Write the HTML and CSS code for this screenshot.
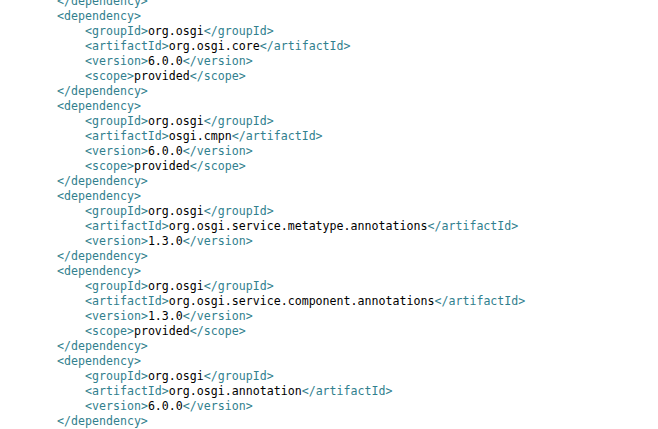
FILE: index.html
```html
<!DOCTYPE html>
<html>
<head>
<meta charset="utf-8">
<link rel="stylesheet" href="styles.css">
</head>
<body>
<pre class="code"><span class="t">&lt;/dependency&gt;</span>
<span class="t">&lt;dependency&gt;</span>
    <span class="t">&lt;groupId&gt;</span>org.osgi<span class="t">&lt;/groupId&gt;</span>
    <span class="t">&lt;artifactId&gt;</span>org.osgi.core<span class="t">&lt;/artifactId&gt;</span>
    <span class="t">&lt;version&gt;</span>6.0.0<span class="t">&lt;/version&gt;</span>
    <span class="t">&lt;scope&gt;</span>provided<span class="t">&lt;/scope&gt;</span>
<span class="t">&lt;/dependency&gt;</span>
<span class="t">&lt;dependency&gt;</span>
    <span class="t">&lt;groupId&gt;</span>org.osgi<span class="t">&lt;/groupId&gt;</span>
    <span class="t">&lt;artifactId&gt;</span>osgi.cmpn<span class="t">&lt;/artifactId&gt;</span>
    <span class="t">&lt;version&gt;</span>6.0.0<span class="t">&lt;/version&gt;</span>
    <span class="t">&lt;scope&gt;</span>provided<span class="t">&lt;/scope&gt;</span>
<span class="t">&lt;/dependency&gt;</span>
<span class="t">&lt;dependency&gt;</span>
    <span class="t">&lt;groupId&gt;</span>org.osgi<span class="t">&lt;/groupId&gt;</span>
    <span class="t">&lt;artifactId&gt;</span>org.osgi.service.metatype.annotations<span class="t">&lt;/artifactId&gt;</span>
    <span class="t">&lt;version&gt;</span>1.3.0<span class="t">&lt;/version&gt;</span>
<span class="t">&lt;/dependency&gt;</span>
<span class="t">&lt;dependency&gt;</span>
    <span class="t">&lt;groupId&gt;</span>org.osgi<span class="t">&lt;/groupId&gt;</span>
    <span class="t">&lt;artifactId&gt;</span>org.osgi.service.component.annotations<span class="t">&lt;/artifactId&gt;</span>
    <span class="t">&lt;version&gt;</span>1.3.0<span class="t">&lt;/version&gt;</span>
    <span class="t">&lt;scope&gt;</span>provided<span class="t">&lt;/scope&gt;</span>
<span class="t">&lt;/dependency&gt;</span>
<span class="t">&lt;dependency&gt;</span>
    <span class="t">&lt;groupId&gt;</span>org.osgi<span class="t">&lt;/groupId&gt;</span>
    <span class="t">&lt;artifactId&gt;</span>org.osgi.annotation<span class="t">&lt;/artifactId&gt;</span>
    <span class="t">&lt;version&gt;</span>6.0.0<span class="t">&lt;/version&gt;</span>
<span class="t">&lt;/dependency&gt;</span></pre>
</body>
</html>
```
FILE: styles.css
```css
html, body {
  margin: 0;
  padding: 0;
  background: #ffffff;
  overflow: hidden;
}
.code {
  margin: -6px 0 0 0;
  padding: 0 0 0 57px;
  font-family: "DejaVu Sans Mono", "Liberation Mono", monospace;
  font-size: 11.62px;
  line-height: 15px;
  color: #000000;
}
.t {
  color: #31808e;
}
```
